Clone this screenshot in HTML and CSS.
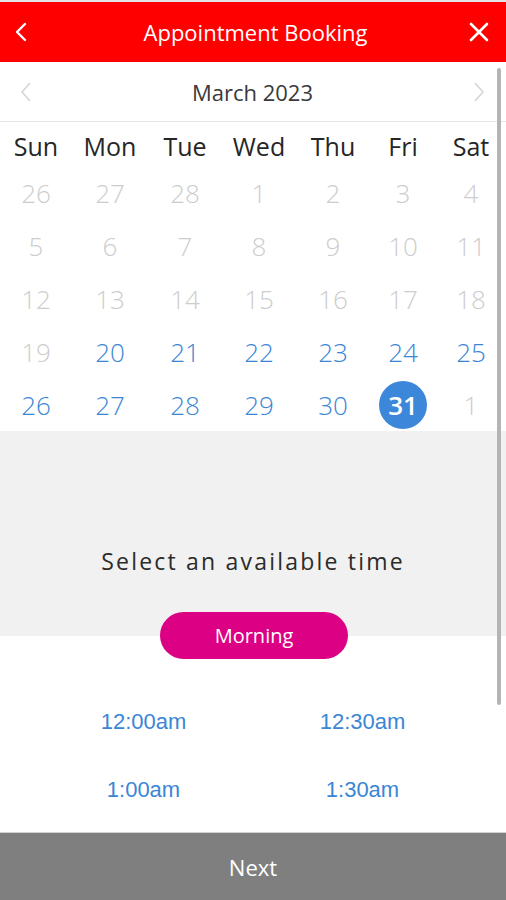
FILE: index.html
```html
<!DOCTYPE html>
<html lang="en">
<head>
    <meta charset="UTF-8">
    <meta name="viewport" content="width=device-width, initial-scale=1.0">
    <title>Appointment Booking</title>
    <link rel="stylesheet" href="styles.css">
</head>
<body>
    <div class="screen">
        <div class="topline"></div>

        <!-- App bar -->
        <header class="appbar">
            <svg class="appbar-icon" width="16" height="22" viewBox="0 0 16 22">
                <polyline points="12,3 4,11 12,19" fill="none" stroke="#fff" stroke-width="2.4" stroke-linecap="round" stroke-linejoin="round"/>
            </svg>
            <h1 class="appbar-title">Appointment Booking</h1>
            <svg class="appbar-icon close" width="22" height="22" viewBox="0 0 22 22">
                <path d="M3 3 L19 19 M19 3 L3 19" fill="none" stroke="#fff" stroke-width="2.6" stroke-linecap="round"/>
            </svg>
        </header>

        <div class="content">
            <!-- Month navigation -->
            <div class="month-nav">
                <svg width="14" height="22" viewBox="0 0 14 22">
                    <polyline points="11,2 3,11 11,20" fill="none" stroke="#d6d6d6" stroke-width="1.6"/>
                </svg>
                <span class="month-title">March 2023</span>
                <svg width="14" height="22" viewBox="0 0 14 22">
                    <polyline points="3,2 11,11 3,20" fill="none" stroke="#d6d6d6" stroke-width="1.6"/>
                </svg>
            </div>

            <!-- Calendar -->
            <div class="calendar">
                <div class="weekday">Sun</div>
                <div class="weekday">Mon</div>
                <div class="weekday">Tue</div>
                <div class="weekday">Wed</div>
                <div class="weekday">Thu</div>
                <div class="weekday">Fri</div>
                <div class="weekday">Sat</div>

                <div class="day muted">26</div>
                <div class="day muted">27</div>
                <div class="day muted">28</div>
                <div class="day muted">1</div>
                <div class="day muted">2</div>
                <div class="day muted">3</div>
                <div class="day muted">4</div>

                <div class="day muted">5</div>
                <div class="day muted">6</div>
                <div class="day muted">7</div>
                <div class="day muted">8</div>
                <div class="day muted">9</div>
                <div class="day muted">10</div>
                <div class="day muted">11</div>

                <div class="day muted">12</div>
                <div class="day muted">13</div>
                <div class="day muted">14</div>
                <div class="day muted">15</div>
                <div class="day muted">16</div>
                <div class="day muted">17</div>
                <div class="day muted">18</div>

                <div class="day muted">19</div>
                <div class="day open">20</div>
                <div class="day open">21</div>
                <div class="day open">22</div>
                <div class="day open">23</div>
                <div class="day open">24</div>
                <div class="day open">25</div>

                <div class="day open">26</div>
                <div class="day open">27</div>
                <div class="day open">28</div>
                <div class="day open">29</div>
                <div class="day open">30</div>
                <div class="day"><span class="selected">31</span></div>
                <div class="day muted">1</div>
            </div>

            <!-- Time selection -->
            <div class="time-intro">
                <p>Select an available time</p>
            </div>
            <div class="period">
                <button class="period-btn">Morning</button>
            </div>

            <div class="slots">
                <a class="slot">12:00am</a>
                <a class="slot">12:30am</a>
                <a class="slot">1:00am</a>
                <a class="slot">1:30am</a>
            </div>

            <div class="scrollbar"></div>
        </div>

        <button class="next-btn">Next</button>
    </div>
</body>
</html>
```

FILE: styles.css
```css
body {
    margin: 0;
    padding: 0;
    font-family: "Open Sans", "Noto Sans", sans-serif;
    background-color: #fff;
}

.screen {
    height: 900px;
    display: flex;
    flex-direction: column;
    overflow: hidden;
}

.topline {
    height: 2px;
    background-color: #e4e4e4;
}

.appbar {
    height: 60px;
    background-color: #ff0000;
    display: grid;
    grid-template-columns: 1fr auto 1fr;
    align-items: center;
    padding: 0 16px 0 13px;
}

.appbar-icon {
    display: block;
}

.appbar-icon.close {
    justify-self: end;
}

.appbar-title {
    margin: 0 0 0 8px;
    color: #fff;
    font-size: 22px;
    font-weight: 500;
}

.content {
    flex: 1;
    position: relative;
}

.month-nav {
    height: 59px;
    border-bottom: 1px solid #e6e6e6;
    display: flex;
    align-items: center;
    justify-content: space-between;
    padding: 0 20px 0 19px;
}

.month-title {
    font-size: 22px;
    color: #3a3a3a;
}

.calendar {
    display: grid;
    grid-template-columns: 72px 76px 74px 74px 74px 66px 70px;
    grid-template-rows: 45px repeat(5, 52.8px);
}

.weekday {
    display: flex;
    align-items: center;
    justify-content: center;
    font-size: 25px;
    color: #262626;
    padding-top: 3px;
}

.day {
    display: flex;
    align-items: center;
    justify-content: center;
    font-size: 26px;
    font-weight: 300;
}

.muted {
    color: #cdcdcd;
}

.open {
    color: #3a86d5;
}

.selected {
    width: 48px;
    height: 48px;
    border-radius: 50%;
    background-color: #3c87da;
    color: #fff;
    font-weight: 600;
    display: flex;
    align-items: center;
    justify-content: center;
}

.time-intro {
    height: 205px;
    background-color: #f1f1f1;
    display: flex;
    flex-direction: column;
    justify-content: flex-end;
}

.time-intro p {
    margin: 0 0 58px;
    text-align: center;
    font-size: 23px;
    letter-spacing: 2.2px;
    color: #2b2b2b;
    line-height: 34px;
}

.period {
    display: flex;
    justify-content: center;
    margin-top: -24px;
}

.period-btn {
    width: 188px;
    height: 47px;
    margin-left: 2px;
    border: none;
    border-radius: 24px;
    background-color: #dc0084;
    color: #fff;
    font-family: "Open Sans", sans-serif;
    font-size: 20px;
    font-weight: 500;
}

.slots {
    display: grid;
    grid-template-columns: 219px 219px;
    grid-auto-rows: 68px;
    justify-content: center;
    margin-top: 29px;
}

.slot {
    display: flex;
    align-items: center;
    justify-content: center;
    font-family: "Liberation Sans", Arial, sans-serif;
    font-size: 22px;
    color: #3a86d5;
}

.scrollbar {
    position: absolute;
    top: 6px;
    right: 5px;
    width: 4px;
    height: 637px;
    background-color: #b4b4b4;
    border-radius: 2px;
}

.next-btn {
    height: 68px;
    border: none;
    border-top: 1px solid #d2d2d2;
    background-color: #7f7f7f;
    color: #fff;
    font-family: "Open Sans", sans-serif;
    font-size: 22px;
}
```
